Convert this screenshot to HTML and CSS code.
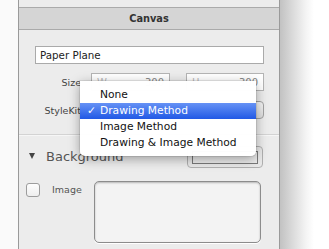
FILE: index.html
```html
<!DOCTYPE html>
<html lang="en">
<head>
    <meta charset="UTF-8">
    <title>Canvas Inspector</title>
    <link rel="stylesheet" href="styles.css">
</head>
<body>
    <div class="window">
        <div class="sidebar"></div>

        <div class="inspector">
            <div class="top-strip"></div>
            <div class="header">Canvas</div>

            <div class="canvas-section">
                <input class="name-field" type="text" value="Paper Plane">

                <div class="form-row">
                    <span class="label">Size</span>
                    <div class="field">
                        <span class="hint">W</span>
                        <span class="value">300</span>
                    </div>
                    <div class="field">
                        <span class="hint">H</span>
                        <span class="value">300</span>
                    </div>
                </div>

                <div class="form-row">
                    <span class="label">StyleKit</span>
                    <div class="popup"></div>
                </div>
            </div>

            <div class="bg-section">
                <div class="section-title">
                    <span class="disclosure"></span>
                    <span class="title-text">Background</span>
                    <div class="color-well"><div class="swatch"></div></div>
                </div>

                <div class="image-row">
                    <span class="checkbox"></span>
                    <span class="image-label">Image</span>
                    <div class="image-well"></div>
                </div>
            </div>

            <ul class="menu">
                <li>None</li>
                <li class="selected"><span class="check">✓</span>Drawing Method</li>
                <li>Image Method</li>
                <li>Drawing &amp; Image Method</li>
            </ul>
        </div>

        <div class="canvas-area"></div>
    </div>
</body>
</html>
```

FILE: styles.css
```css
* {
    box-sizing: border-box;
}
body {
    margin: 0;
    font-family: "DejaVu Sans", Verdana, sans-serif;
    background-color: #fff;
}
.window {
    display: flex;
    height: 249px;
    overflow: hidden;
}
.sidebar {
    width: 19px;
    background-color: #fafafa;
    border-right: 1px solid #9a9a9a;
}
.inspector {
    position: relative;
    width: 261px;
    background-color: #ececec;
    border-right: 1px solid #9a9a9a;
}
.canvas-area {
    flex: 1;
    background: linear-gradient(to right, #c2c2c2, #f4f4f4 26px, #fff 34px);
}
.top-strip {
    height: 8px;
    border-bottom: 1px solid #aaa;
}
.header {
    height: 22px;
    background-color: #d5d5d5;
    border-bottom: 1px solid #aaa;
    text-align: center;
    font-weight: bold;
    font-size: 9.8px;
    line-height: 21px;
    color: #333;
}
.canvas-section {
    padding: 16px 15px 15px 16px;
    border-bottom: 1px solid #d3d3d3;
}
.name-field {
    display: block;
    width: 229px;
    height: 18px;
    margin: 0 0 9px;
    padding: 0 4px;
    border: 1px solid #aaa;
    background-color: #fff;
    font-family: inherit;
    font-size: 10.3px;
    color: #222;
    outline: none;
}
.form-row {
    display: flex;
    align-items: center;
    height: 18px;
    margin-bottom: 10px;
}
.form-row:last-child {
    margin-bottom: 0;
}
.label {
    width: 46px;
    margin-right: 10px;
    text-align: right;
    font-size: 9.5px;
    color: #444;
    white-space: nowrap;
}
.field {
    display: flex;
    justify-content: space-between;
    align-items: center;
    width: 79px;
    height: 18px;
    padding: 0 5px;
    border: 1px solid #b4b4b4;
    background-color: #fff;
    font-size: 10px;
}
.field + .field {
    width: 78px;
    margin-left: 16px;
}
.hint {
    color: #bbb;
}
.value {
    color: #888;
}
.popup {
    width: 173px;
    height: 18px;
    border: 1px solid #a2a2a2;
    border-radius: 4px;
    background: linear-gradient(#f6f6f6, #dcdcdc);
}
.bg-section {
    border-top: 1px solid #f6f6f6;
    padding: 10px 0 0;
}
.section-title {
    display: flex;
    align-items: center;
    height: 21px;
    padding-left: 10px;
}
.disclosure {
    width: 0;
    height: 0;
    border-left: 3.5px solid transparent;
    border-right: 3.5px solid transparent;
    border-top: 6px solid #444;
    margin-right: 11px;
    margin-bottom: 1px;
}
.title-text {
    font-size: 13px;
    color: #555;
    margin-bottom: 1px;
}
.color-well {
    margin-left: auto;
    margin-right: 16px;
    width: 76px;
    height: 22px;
    padding: 4px;
    border: 1px solid #b0b0b0;
    border-radius: 4px;
    background-color: #e9e9e9;
}
.swatch {
    height: 13px;
    border: 1px solid #7a7a7a;
    background-color: #ececec;
}
.image-row {
    display: flex;
    align-items: flex-start;
    padding: 14px 0 0 7px;
}
.checkbox {
    width: 14px;
    height: 14px;
    margin-top: 2px;
    border: 1px solid #9c9c9c;
    border-radius: 3px;
    background: linear-gradient(#fdfdfd, #eeeeee);
}
.image-label {
    margin: 3px 0 0 12px;
    width: 42px;
    font-size: 9.5px;
    color: #555;
}
.image-well {
    width: 167px;
    height: 62px;
    border: 1px solid #8c8c8c;
    border-radius: 5px;
    background-color: #f3f3f3;
    box-shadow: inset 0 1px 2px rgba(0, 0, 0, 0.25), 0 1px 0 #fff;
}
.menu {
    position: absolute;
    left: 61px;
    top: 81px;
    width: 176px;
    margin: 0;
    padding: 6px 0 5px;
    list-style: none;
    background-color: rgba(255, 255, 255, 0.98);
    border-radius: 0 0 5px 5px;
    box-shadow: 0 3px 12px rgba(0, 0, 0, 0.35), 0 0 0 1px rgba(0, 0, 0, 0.08);
}
.menu li {
    position: relative;
    height: 16px;
    padding-left: 20px;
    font-size: 10.7px;
    line-height: 16px;
    color: #111;
    white-space: nowrap;
}
.menu li.selected {
    background: linear-gradient(#6692f5, #2159e5);
    color: #fff;
}
.check {
    position: absolute;
    left: 7px;
    top: 0;
}
```
